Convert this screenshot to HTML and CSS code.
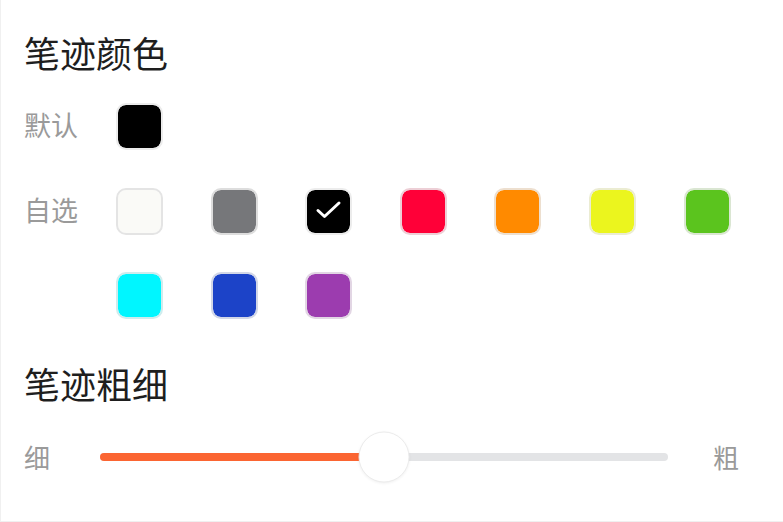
FILE: index.html
```html
<!DOCTYPE html>
<html lang="zh">
<head>
<meta charset="utf-8">
<link rel="stylesheet" href="styles.css">
</head>
<body>
<div class="panel">
  <h2 class="title">笔迹颜色</h2>
  <div class="row row-default">
    <div class="label">默认</div>
    <div class="swatches">
      <div class="sw c-black"></div>
    </div>
  </div>
  <div class="row row-custom">
    <div class="label">自选</div>
    <div class="swatches">
      <div class="sw c-white"></div>
      <div class="sw c-gray"></div>
      <div class="sw c-black sel">
        <svg class="check" viewBox="0 0 47 47" width="47" height="47"><polyline points="13,22.5 19.5,28.5 34,15" fill="none" stroke="#fff" stroke-width="3" stroke-linecap="round" stroke-linejoin="round"/></svg>
      </div>
      <div class="sw c-red"></div>
      <div class="sw c-orange"></div>
      <div class="sw c-yellow"></div>
      <div class="sw c-green"></div>
      <div class="sw c-cyan"></div>
      <div class="sw c-blue"></div>
      <div class="sw c-purple"></div>
    </div>
  </div>
  <h2 class="title title-2">笔迹粗细</h2>
  <div class="slider-row">
    <div class="s-label">细</div>
    <div class="track">
      <div class="fill" style="width:50%"></div>
      <div class="thumb" style="left:50%"></div>
    </div>
    <div class="s-label">粗</div>
  </div>
</div>
</body>
</html>
```
FILE: styles.css
```css
html, body {
  margin: 0;
  padding: 0;
  background: #fff;
}
.panel {
  width: 783px;
  height: 522px;
  box-sizing: border-box;
  border-left: 1px solid #f0f0f0;
  border-bottom: 1px solid #f0f0f0;
  padding: 29px 44px 0 23px;
  font-family: "Noto Sans CJK SC", "Noto Sans", sans-serif;
  overflow: hidden;
}
.title {
  margin: 0;
  font-size: 36px;
  line-height: 47px;
  font-weight: 400;
  color: #1e1e1e;
}
.title-2 {
  margin-top: 41px;
}
.row {
  display: flex;
  align-items: flex-start;
}
.row-default {
  margin-top: 27px;
}
.row-custom {
  margin-top: 38px;
}
.label {
  width: 92px;
  flex: none;
  font-size: 27px;
  line-height: 44px;
  color: #9a9a9a;
}
.swatches {
  display: flex;
  flex-wrap: wrap;
  column-gap: 47.6px;
  row-gap: 37px;
  width: 620px;
}
.sw {
  --c: #000;
  width: 47px;
  height: 47px;
  box-sizing: border-box;
  border-radius: 10px;
  border: 2px solid color-mix(in srgb, var(--c) 12%, #ebebeb);
  background: var(--c);
  background-clip: padding-box;
  position: relative;
}
.check {
  position: absolute;
  left: -2px;
  top: -2px;
}
.c-black { --c: #000000; border-color: #ececec; }
.c-white { --c: #fafaf7; border-color: #e4e4e4; }
.c-gray { --c: #76777a; }
.c-red { --c: #ff0038; }
.c-orange { --c: #ff8a00; }
.c-yellow { --c: #ebf51e; }
.c-green { --c: #5bc41e; }
.c-cyan { --c: #00f6ff; }
.c-blue { --c: #1c43c8; }
.c-purple { --c: #9c3caf; }

.slider-row {
  margin-top: 24px;
  height: 52px;
  display: flex;
  align-items: center;
}
.s-label {
  flex: none;
  width: 26px;
  font-size: 26px;
  line-height: 36px;
  color: #9a9a9a;
}
.track {
  flex: 1;
  margin: 0 45px 0 50px;
  height: 8px;
  border-radius: 4px;
  background: #e3e4e6;
  position: relative;
}
.fill {
  height: 100%;
  border-radius: 4px 0 0 4px;
  background: #fb6532;
}
.thumb {
  position: absolute;
  top: 50%;
  width: 51px;
  height: 51px;
  box-sizing: border-box;
  border-radius: 50%;
  background: #fff;
  border: 1px solid #ececec;
  box-shadow: 0 1px 3px rgba(0, 0, 0, 0.06);
  transform: translate(-50%, -50%);
}
```
